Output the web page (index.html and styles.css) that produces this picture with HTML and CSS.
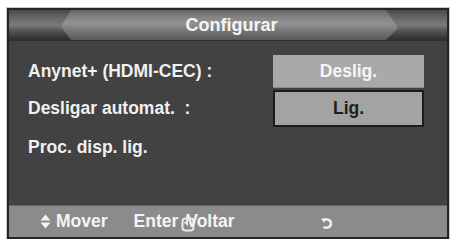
FILE: index.html
```html
<!DOCTYPE html>
<html>
<head>
<meta charset="utf-8">
<link rel="stylesheet" href="styles.css">
</head>
<body>
<div class="screen">
  <div class="titlebar">
    <div class="pill"><span class="title">Configurar</span></div>
  </div>
  <div class="content">
    <div class="row">
      <span class="label">Anynet+ (HDMI-CEC) :</span>
      <span class="box box-off">Deslig.</span>
    </div>
    <div class="row">
      <span class="label">Desligar automat.&nbsp; :</span>
      <span class="box box-sel">Lig.</span>
    </div>
    <div class="row">
      <span class="label">Proc. disp. lig.</span>
    </div>
  </div>
  <div class="footer">
    <span class="item">
      <svg class="ico-move" width="11" height="15" viewBox="0 0 11 15"><path d="M5.5 0.5 L10.5 6.5 L0.5 6.5 Z M0.5 8.5 L10.5 8.5 L5.5 14.5 Z" fill="#f2f2f2"/></svg>
      <span>Mover</span>
    </span>
    <span class="item enter">
      <span>Enter</span>
      <svg class="ico-enter" width="16" height="17" viewBox="0 0 16 17"><rect x="1.5" y="3.5" width="11" height="12" rx="3" fill="none" stroke="#e8e8e8" stroke-width="2"/><path d="M6 1 L6 9 L3.5 7" fill="none" stroke="#e8e8e8" stroke-width="2"/></svg>
      <span class="voltar">Voltar</span>
    </span>
    <span class="item ret">
      <svg width="14" height="13" viewBox="0 0 14 13"><path d="M3 3.5 C6 1.5 11 2 11 6.5 C11 10.5 6 11.5 3.5 10" fill="none" stroke="#f2f2f2" stroke-width="2.4"/><path d="M1 1.5 L5.5 1.5 L4.5 6 Z" fill="#f2f2f2"/></svg>
    </span>
  </div>
</div>
</body>
</html>
```
FILE: styles.css
```css
html, body {
  margin: 0;
  padding: 0;
  background: #ffffff;
}
body {
  font-family: "Liberation Sans", Arial, sans-serif;
  font-weight: bold;
}
.screen {
  margin: 8px 0 0 7px;
  width: 438px;
  border: 2px solid #262626;
  box-shadow: 0 0 0 1px #c8c8c8;
  background: #424242;
  display: flex;
  flex-direction: column;
}
.titlebar {
  height: 30px;
  background: linear-gradient(to bottom, #4a4a4a 0%, #6a6a6a 30%, #7a7a7a 50%, #4c4c4c 75%, #2e2e2e 100%);
  display: flex;
  border-bottom: 1px solid #2e2e2e;
}
.pill {
  flex: 1;
  margin: 0 49px 0 52px;
  clip-path: polygon(10px 0, calc(100% - 12px) 0, 100% 60%, calc(100% - 12px) 100%, 10px 100%, 0 55%);
  background: linear-gradient(to bottom, #666 0%, #848484 25%, #929292 45%, #767676 70%, #585858 100%);
  display: flex;
  align-items: center;
  justify-content: center;
}
.title {
  color: #f4f4f4;
  font-size: 18px;
  margin-left: 4px;
  margin-top: 1px;
}
.content {
  height: 164px;
  padding: 14px 23px 0 19px;
  box-sizing: border-box;
  display: flex;
  flex-direction: column;
  gap: 2px;
}
.row {
  display: flex;
  align-items: center;
  justify-content: space-between;
  height: 33px;
}
.row + .row {
  height: 37px;
}
.label {
  color: #f0f0f0;
  font-size: 17.5px;
}
.box {
  width: 151px;
  height: 100%;
  box-sizing: border-box;
  display: flex;
  align-items: center;
  justify-content: center;
  font-size: 17.5px;
}
.box-off {
  background: #a9a9a9;
  color: #f6f6f6;
  border-bottom: 1px solid #8a8a8a;
}
.box-sel {
  background: #a3a3a3;
  color: #1e1e1e;
  border: 2px solid #1c1c1c;
}
.footer {
  height: 32px;
  background: #8b8b8b;
  border-top: 1px solid #666;
  display: flex;
  align-items: center;
  padding: 0 0 0 31px;
  color: #f4f4f4;
  font-size: 17.5px;
  box-sizing: border-box;
}
.item {
  display: flex;
  align-items: center;
}
.ico-move {
  margin-right: 5px;
}
.enter {
  margin-left: 26px;
}
.ico-enter {
  margin-left: 3px;
  margin-top: 3px;
}
.voltar {
  margin-left: -11px;
}
.ret {
  margin-left: 85px;
  margin-top: 3px;
}
```
